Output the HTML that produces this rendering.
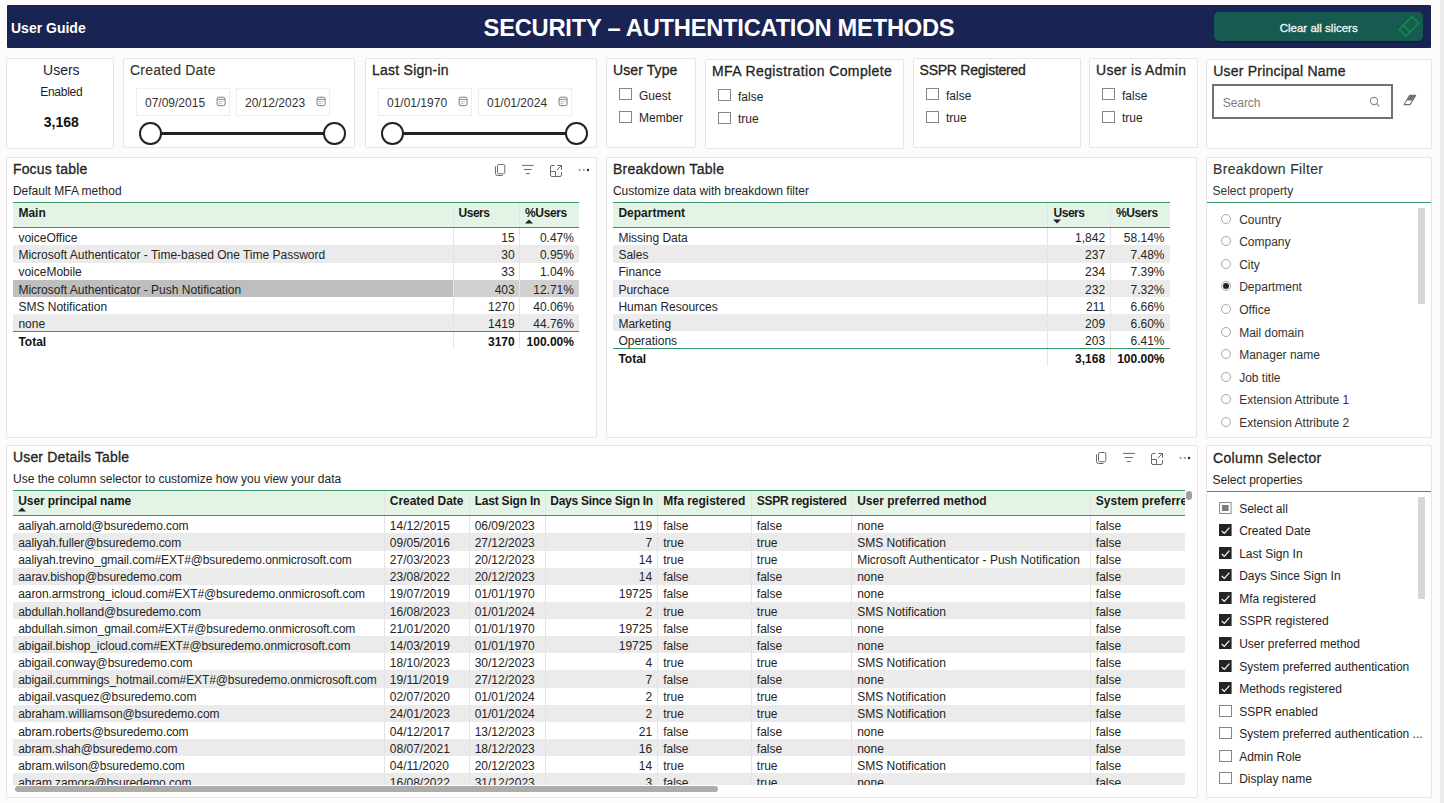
<!DOCTYPE html>
<html><head><meta charset="utf-8"><title>Security - Authentication Methods</title>
<style>
html,body{margin:0;padding:0;}
body{width:1444px;height:803px;overflow:hidden;background:#FDFBFC;position:relative;font-family:"Liberation Sans",sans-serif;color:#252423;}
.t{position:absolute;white-space:nowrap;}
.b{position:absolute;}
svg.b{overflow:visible;}
</style></head><body>
<div class="b" style="left:1440px;top:0px;width:4px;height:803px;background:#EBEBEB;"></div>
<div class="b" style="left:7px;top:5px;width:1424px;height:43px;background:#1A2452;border-radius:1px;"></div>
<div class="t" style="top:21px;font-size:14px;line-height:14px;font-weight:700;color:#FFFFFF;left:11.00px;">User Guide</div>
<div class="t" style="top:17px;font-size:23.7px;line-height:23.7px;letter-spacing:-0.237px;font-weight:700;color:#FFFFFF;left:419.00px;width:600px;text-align:center;">SECURITY – AUTHENTICATION METHODS</div>
<div class="b" style="left:1214px;top:12px;width:209px;height:29px;background:#175A50;border-radius:5px;box-shadow:0 1px 1px rgba(0,0,0,0.25);"></div>
<div class="t" style="top:23px;font-size:11.5px;line-height:11.5px;color:#F4F7F6;left:1018.70px;width:600px;text-align:center;-webkit-text-stroke:0.3px #F4F7F6;">Clear all slicers</div>
<svg class="b" style="left:1396px;top:14px" width="26" height="24" viewBox="0 0 26 24"><g transform="translate(12.9,12.4) rotate(-45)" fill="none" stroke="#13894F" stroke-width="1.6"><rect x="-9" y="-4.7" width="18" height="9.4"/><line x1="-3.2" y1="-4.7" x2="-3.2" y2="4.7"/></g></svg>
<div class="b" style="left:6px;top:58px;width:108px;height:91px;background:#fff;border:1px solid #E6E6E6;border-radius:2px;box-sizing:border-box;"></div>
<div class="t" style="top:63px;font-size:14px;line-height:14px;color:#161B33;left:-238.70px;width:600px;text-align:center;">Users</div>
<div class="t" style="top:86px;font-size:12px;line-height:12px;letter-spacing:-0.255px;color:#1C1C2E;left:-238.70px;width:600px;text-align:center;">Enabled</div>
<div class="t" style="top:115px;font-size:14px;line-height:14px;font-weight:700;color:#111111;left:-238.70px;width:600px;text-align:center;">3,168</div>
<div class="b" style="left:123px;top:58px;width:232px;height:90px;background:#fff;border:1px solid #E6E6E6;border-radius:2px;box-sizing:border-box;"></div>
<div class="t" style="top:63px;font-size:14px;line-height:14px;letter-spacing:0.197px;color:#333333;left:130.00px;-webkit-text-stroke:0.15px #333;">Created Date</div>
<div class="b" style="left:136px;top:88px;width:94px;height:28px;border:1px solid #EEEEEE;box-sizing:border-box;background:#fff;"></div>
<div class="t" style="top:97px;font-size:12px;line-height:12px;color:#333333;left:145.00px;">07/09/2015</div>
<svg class="b" style="left:216px;top:96px" width="12" height="12" viewBox="0 0 12 12"><rect x="1.1" y="1.2" width="8" height="8.5" rx="1.8" fill="none" stroke="#7C7C7C" stroke-width="1"/><path d="M1.4 3.4 H8.8" stroke="#7C7C7C" stroke-width="0.9" fill="none"/><path d="M2.8 5.7 H5.6 M2.8 7.7 H5.6" stroke="#A0A0A0" stroke-width="0.8" fill="none"/><circle cx="6.9" cy="5.7" r="0.55" fill="#8A8A8A"/></svg>
<div class="b" style="left:236px;top:88px;width:94px;height:28px;border:1px solid #EEEEEE;box-sizing:border-box;background:#fff;"></div>
<div class="t" style="top:97px;font-size:12px;line-height:12px;color:#333333;left:245.00px;">20/12/2023</div>
<svg class="b" style="left:316px;top:96px" width="12" height="12" viewBox="0 0 12 12"><rect x="1.1" y="1.2" width="8" height="8.5" rx="1.8" fill="none" stroke="#7C7C7C" stroke-width="1"/><path d="M1.4 3.4 H8.8" stroke="#7C7C7C" stroke-width="0.9" fill="none"/><path d="M2.8 5.7 H5.6 M2.8 7.7 H5.6" stroke="#A0A0A0" stroke-width="0.8" fill="none"/><circle cx="6.9" cy="5.7" r="0.55" fill="#8A8A8A"/></svg>
<div class="b" style="left:150px;top:132px;width:184px;height:3px;background:#252423;"></div>
<div class="b" style="left:139.1px;top:122.3px;width:22.6px;height:22.6px;border:2.4px solid #252423;border-radius:50%;background:#fff;box-sizing:border-box"></div>
<div class="b" style="left:323.1px;top:122.3px;width:22.6px;height:22.6px;border:2.4px solid #252423;border-radius:50%;background:#fff;box-sizing:border-box"></div>
<div class="b" style="left:365px;top:58px;width:232px;height:90px;background:#fff;border:1px solid #E6E6E6;border-radius:2px;box-sizing:border-box;"></div>
<div class="t" style="top:63px;font-size:14px;line-height:14px;letter-spacing:0.245px;left:372.00px;-webkit-text-stroke:0.3px #252423;">Last Sign-in</div>
<div class="b" style="left:378px;top:88px;width:94px;height:28px;border:1px solid #EEEEEE;box-sizing:border-box;background:#fff;"></div>
<div class="t" style="top:97px;font-size:12px;line-height:12px;color:#333333;left:387.00px;">01/01/1970</div>
<svg class="b" style="left:458px;top:96px" width="12" height="12" viewBox="0 0 12 12"><rect x="1.1" y="1.2" width="8" height="8.5" rx="1.8" fill="none" stroke="#7C7C7C" stroke-width="1"/><path d="M1.4 3.4 H8.8" stroke="#7C7C7C" stroke-width="0.9" fill="none"/><path d="M2.8 5.7 H5.6 M2.8 7.7 H5.6" stroke="#A0A0A0" stroke-width="0.8" fill="none"/><circle cx="6.9" cy="5.7" r="0.55" fill="#8A8A8A"/></svg>
<div class="b" style="left:478px;top:88px;width:94px;height:28px;border:1px solid #EEEEEE;box-sizing:border-box;background:#fff;"></div>
<div class="t" style="top:97px;font-size:12px;line-height:12px;color:#333333;left:487.00px;">01/01/2024</div>
<svg class="b" style="left:558px;top:96px" width="12" height="12" viewBox="0 0 12 12"><rect x="1.1" y="1.2" width="8" height="8.5" rx="1.8" fill="none" stroke="#7C7C7C" stroke-width="1"/><path d="M1.4 3.4 H8.8" stroke="#7C7C7C" stroke-width="0.9" fill="none"/><path d="M2.8 5.7 H5.6 M2.8 7.7 H5.6" stroke="#A0A0A0" stroke-width="0.8" fill="none"/><circle cx="6.9" cy="5.7" r="0.55" fill="#8A8A8A"/></svg>
<div class="b" style="left:392px;top:132px;width:184px;height:3px;background:#252423;"></div>
<div class="b" style="left:381.1px;top:122.3px;width:22.6px;height:22.6px;border:2.4px solid #252423;border-radius:50%;background:#fff;box-sizing:border-box"></div>
<div class="b" style="left:565.1px;top:122.3px;width:22.6px;height:22.6px;border:2.4px solid #252423;border-radius:50%;background:#fff;box-sizing:border-box"></div>
<div class="b" style="left:606px;top:58px;width:90px;height:90px;background:#fff;border:1px solid #E6E6E6;border-radius:2px;box-sizing:border-box;"></div>
<div class="t" style="top:63px;font-size:14px;line-height:14px;letter-spacing:0.096px;left:613.00px;-webkit-text-stroke:0.3px #252423;">User Type</div>
<div class="b" style="left:619px;top:88px;width:12.6px;height:12px;border:1px solid #858585;box-sizing:border-box;background:#fff;"></div>
<div class="t" style="top:90px;font-size:12px;line-height:12px;left:639.00px;">Guest</div>
<div class="b" style="left:619px;top:111px;width:12.6px;height:12px;border:1px solid #858585;box-sizing:border-box;background:#fff;"></div>
<div class="t" style="top:112px;font-size:12px;line-height:12px;left:639.00px;">Member</div>
<div class="b" style="left:705px;top:59px;width:199px;height:90px;background:#fff;border:1px solid #E6E6E6;border-radius:2px;box-sizing:border-box;"></div>
<div class="t" style="top:64px;font-size:14px;line-height:14px;letter-spacing:0.393px;left:712.00px;-webkit-text-stroke:0.3px #252423;">MFA Registration Complete</div>
<div class="b" style="left:718px;top:89px;width:12.6px;height:12px;border:1px solid #858585;box-sizing:border-box;background:#fff;"></div>
<div class="t" style="top:91px;font-size:12px;line-height:12px;left:738.00px;">false</div>
<div class="b" style="left:718px;top:112px;width:12.6px;height:12px;border:1px solid #858585;box-sizing:border-box;background:#fff;"></div>
<div class="t" style="top:113px;font-size:12px;line-height:12px;left:738.00px;">true</div>
<div class="b" style="left:913px;top:58px;width:168px;height:90px;background:#fff;border:1px solid #E6E6E6;border-radius:2px;box-sizing:border-box;"></div>
<div class="t" style="top:63px;font-size:14px;line-height:14px;letter-spacing:-0.250px;left:919.60px;-webkit-text-stroke:0.3px #252423;">SSPR Registered</div>
<div class="b" style="left:926px;top:88px;width:12.6px;height:12px;border:1px solid #858585;box-sizing:border-box;background:#fff;"></div>
<div class="t" style="top:90px;font-size:12px;line-height:12px;left:946.00px;">false</div>
<div class="b" style="left:926px;top:111px;width:12.6px;height:12px;border:1px solid #858585;box-sizing:border-box;background:#fff;"></div>
<div class="t" style="top:112px;font-size:12px;line-height:12px;left:946.00px;">true</div>
<div class="b" style="left:1089px;top:58px;width:109px;height:90px;background:#fff;border:1px solid #E6E6E6;border-radius:2px;box-sizing:border-box;"></div>
<div class="t" style="top:63px;font-size:14px;line-height:14px;letter-spacing:0.305px;left:1096.00px;-webkit-text-stroke:0.3px #252423;">User is Admin</div>
<div class="b" style="left:1102px;top:88px;width:12.6px;height:12px;border:1px solid #858585;box-sizing:border-box;background:#fff;"></div>
<div class="t" style="top:90px;font-size:12px;line-height:12px;left:1122.00px;">false</div>
<div class="b" style="left:1102px;top:111px;width:12.6px;height:12px;border:1px solid #858585;box-sizing:border-box;background:#fff;"></div>
<div class="t" style="top:112px;font-size:12px;line-height:12px;left:1122.00px;">true</div>
<div class="b" style="left:1206px;top:59px;width:226px;height:90px;background:#fff;border:1px solid #E6E6E6;border-radius:2px;box-sizing:border-box;"></div>
<div class="t" style="top:64px;font-size:14px;line-height:14px;letter-spacing:0.221px;left:1213.20px;-webkit-text-stroke:0.3px #252423;">User Principal Name</div>
<div class="b" style="left:1212px;top:84px;width:181px;height:35px;border:2px solid #707070;box-sizing:border-box;background:#fff;"></div>
<div class="t" style="top:97px;font-size:12px;line-height:12px;color:#7E7E7E;left:1222.70px;letter-spacing:-0.05px">Search</div>
<svg class="b" style="left:1368px;top:95px" width="14" height="14" viewBox="0 0 14 14"><circle cx="6" cy="6" r="3.6" fill="none" stroke="#8A8A8A" stroke-width="1.1"/><line x1="8.6" y1="8.6" x2="11.4" y2="11.4" stroke="#8A8A8A" stroke-width="1.2"/></svg>
<svg class="b" style="left:1402px;top:93px" width="16" height="14" viewBox="0 0 16 14"><path d="M7.7 2.3 L13.8 2.3 L8 11.6 L2.1 11.6 Z" fill="none" stroke="#707070" stroke-width="1.05" stroke-linejoin="round"/><path d="M7.7 2.1 L13.9 2.1 L10.9 7.4 L4.5 7.6 Z" fill="#707070"/></svg>
<div class="b" style="left:6px;top:157px;width:591px;height:281px;background:#fff;border:1px solid #E6E6E6;border-radius:2px;box-sizing:border-box;"></div>
<div class="t" style="top:162px;font-size:14px;line-height:14px;letter-spacing:0.196px;left:12.90px;-webkit-text-stroke:0.3px #252423;">Focus table</div>
<div class="t" style="top:185px;font-size:12px;line-height:12px;left:12.90px;">Default MFA method</div>
<svg class="b" style="left:492px;top:160px" width="100" height="20" viewBox="0 0 100 20"><g fill="none" stroke="#6A6A6A" stroke-width="1"><rect x="5.5" y="4.5" width="7.3" height="9.3" rx="1.3"/><path d="M3.5 6.3 V13.5 Q3.5 15.5 5.5 15.5 H10.5"/><path d="M30 5.4 H41.8 M31.8 9.5 H39.7 M33.8 13.6 H37.9"/><path d="M62.5 5.5 H60 Q58.5 5.5 58.5 7 V15 Q58.5 16.5 60 16.5 H68 Q69.5 16.5 69.5 15 V12"/><path d="M58.5 11.5 H63.5 V16.5"/><path d="M65.2 5.5 H69.5 V9.8 M69.3 5.7 L64.8 10.2"/></g><circle cx="87.6" cy="9.9" r="1.15" fill="#A2A2A2"/><circle cx="91.8" cy="9.9" r="1.15" fill="#A2A2A2"/><circle cx="96" cy="9.9" r="1.25" fill="#333"/></svg>
<div class="b" style="left:13px;top:202px;width:566px;height:26px;background:#E3F3E6;"></div>
<div class="b" style="left:13px;top:245.44px;width:566px;height:17.14px;background:#EBEBEB;"></div>
<div class="b" style="left:13px;top:279.71px;width:566px;height:17.14px;background:#D0D0D0;"></div>
<div class="b" style="left:13px;top:279.71px;width:440px;height:17.14px;background:#BEBEBE;"></div>
<div class="b" style="left:13px;top:313.98px;width:566px;height:17.14px;background:#EBEBEB;"></div>
<div class="b" style="left:453px;top:203px;width:1px;height:145.40px;background:#E4E4E4;"></div>
<div class="b" style="left:519px;top:203px;width:1px;height:145.40px;background:#E4E4E4;"></div>
<div class="b" style="left:13px;top:202px;width:566px;height:1.2px;background:#35976A;"></div>
<div class="b" style="left:13px;top:227px;width:566px;height:1.2px;background:#35976A;"></div>
<div class="t" style="top:207px;font-size:12px;line-height:12px;font-weight:700;color:#1A1A1A;left:18.40px;">Main</div>
<div class="t" style="top:207px;font-size:12px;line-height:12px;letter-spacing:-0.465px;font-weight:700;color:#1A1A1A;left:458.50px;">Users</div>
<div class="t" style="top:207px;font-size:12px;line-height:12px;letter-spacing:-0.346px;font-weight:700;color:#1A1A1A;left:525.00px;">%Users</div>
<div class="t" style="top:232px;font-size:12px;line-height:12px;left:18.40px;">voiceOffice</div>
<div class="t" style="top:232px;font-size:12px;line-height:12px;right:929.30px;">15</div>
<div class="t" style="top:232px;font-size:12px;line-height:12px;right:870.10px;">0.47%</div>
<div class="t" style="top:249px;font-size:12px;line-height:12px;left:18.40px;">Microsoft Authenticator - Time-based One Time Password</div>
<div class="t" style="top:249px;font-size:12px;line-height:12px;right:929.30px;">30</div>
<div class="t" style="top:249px;font-size:12px;line-height:12px;right:870.10px;">0.95%</div>
<div class="t" style="top:266px;font-size:12px;line-height:12px;left:18.40px;">voiceMobile</div>
<div class="t" style="top:266px;font-size:12px;line-height:12px;right:929.30px;">33</div>
<div class="t" style="top:266px;font-size:12px;line-height:12px;right:870.10px;">1.04%</div>
<div class="t" style="top:284px;font-size:12px;line-height:12px;left:18.40px;">Microsoft Authenticator - Push Notification</div>
<div class="t" style="top:284px;font-size:12px;line-height:12px;right:929.30px;">403</div>
<div class="t" style="top:284px;font-size:12px;line-height:12px;right:870.10px;">12.71%</div>
<div class="t" style="top:301px;font-size:12px;line-height:12px;left:18.40px;">SMS Notification</div>
<div class="t" style="top:301px;font-size:12px;line-height:12px;right:929.30px;">1270</div>
<div class="t" style="top:301px;font-size:12px;line-height:12px;right:870.10px;">40.06%</div>
<div class="t" style="top:318px;font-size:12px;line-height:12px;left:18.40px;">none</div>
<div class="t" style="top:318px;font-size:12px;line-height:12px;right:929.30px;">1419</div>
<div class="t" style="top:318px;font-size:12px;line-height:12px;right:870.10px;">44.76%</div>
<div class="b" style="left:13px;top:331px;width:566px;height:1.2px;background:#35976A;"></div>
<div class="t" style="top:336px;font-size:12px;line-height:12px;font-weight:700;color:#111111;left:18.40px;">Total</div>
<div class="t" style="top:336px;font-size:12px;line-height:12px;font-weight:700;color:#111111;right:929.30px;">3170</div>
<div class="t" style="top:336px;font-size:12px;line-height:12px;font-weight:700;color:#111111;right:870.10px;">100.00%</div>
<svg class="b" style="left:524.7px;top:219px" width="8" height="5" viewBox="0 0 8 5"><path d="M0 4.6 L4 0.4 L8 4.6 Z" fill="#222"/></svg>
<div class="b" style="left:606px;top:157px;width:591px;height:281px;background:#fff;border:1px solid #E6E6E6;border-radius:2px;box-sizing:border-box;"></div>
<div class="t" style="top:162px;font-size:14px;line-height:14px;letter-spacing:0.278px;left:612.90px;-webkit-text-stroke:0.3px #252423;">Breakdown Table</div>
<div class="t" style="top:185px;font-size:12px;line-height:12px;left:612.90px;">Customize data with breakdown filter</div>
<div class="b" style="left:613px;top:202px;width:557px;height:26px;background:#E3F3E6;"></div>
<div class="b" style="left:613px;top:245.44px;width:557px;height:17.14px;background:#EBEBEB;"></div>
<div class="b" style="left:613px;top:279.71px;width:557px;height:17.14px;background:#EBEBEB;"></div>
<div class="b" style="left:613px;top:313.98px;width:557px;height:17.14px;background:#EBEBEB;"></div>
<div class="b" style="left:1047px;top:203px;width:1px;height:162.80px;background:#E4E4E4;"></div>
<div class="b" style="left:1110px;top:203px;width:1px;height:162.80px;background:#E4E4E4;"></div>
<div class="b" style="left:613px;top:202px;width:557px;height:1.2px;background:#35976A;"></div>
<div class="b" style="left:613px;top:227px;width:557px;height:1.2px;background:#35976A;"></div>
<div class="t" style="top:207px;font-size:12px;line-height:12px;font-weight:700;color:#1A1A1A;left:618.40px;">Department</div>
<div class="t" style="top:207px;font-size:12px;line-height:12px;letter-spacing:-0.465px;font-weight:700;color:#1A1A1A;left:1053.50px;">Users</div>
<div class="t" style="top:207px;font-size:12px;line-height:12px;letter-spacing:-0.346px;font-weight:700;color:#1A1A1A;left:1115.90px;">%Users</div>
<div class="t" style="top:232px;font-size:12px;line-height:12px;left:618.40px;">Missing Data</div>
<div class="t" style="top:232px;font-size:12px;line-height:12px;right:338.90px;">1,842</div>
<div class="t" style="top:232px;font-size:12px;line-height:12px;right:279.50px;">58.14%</div>
<div class="t" style="top:249px;font-size:12px;line-height:12px;left:618.40px;">Sales</div>
<div class="t" style="top:249px;font-size:12px;line-height:12px;right:338.90px;">237</div>
<div class="t" style="top:249px;font-size:12px;line-height:12px;right:279.50px;">7.48%</div>
<div class="t" style="top:266px;font-size:12px;line-height:12px;left:618.40px;">Finance</div>
<div class="t" style="top:266px;font-size:12px;line-height:12px;right:338.90px;">234</div>
<div class="t" style="top:266px;font-size:12px;line-height:12px;right:279.50px;">7.39%</div>
<div class="t" style="top:284px;font-size:12px;line-height:12px;left:618.40px;">Purchace</div>
<div class="t" style="top:284px;font-size:12px;line-height:12px;right:338.90px;">232</div>
<div class="t" style="top:284px;font-size:12px;line-height:12px;right:279.50px;">7.32%</div>
<div class="t" style="top:301px;font-size:12px;line-height:12px;left:618.40px;">Human Resources</div>
<div class="t" style="top:301px;font-size:12px;line-height:12px;right:338.90px;">211</div>
<div class="t" style="top:301px;font-size:12px;line-height:12px;right:279.50px;">6.66%</div>
<div class="t" style="top:318px;font-size:12px;line-height:12px;left:618.40px;">Marketing</div>
<div class="t" style="top:318px;font-size:12px;line-height:12px;right:338.90px;">209</div>
<div class="t" style="top:318px;font-size:12px;line-height:12px;right:279.50px;">6.60%</div>
<div class="t" style="top:335px;font-size:12px;line-height:12px;left:618.40px;">Operations</div>
<div class="t" style="top:335px;font-size:12px;line-height:12px;right:338.90px;">203</div>
<div class="t" style="top:335px;font-size:12px;line-height:12px;right:279.50px;">6.41%</div>
<div class="b" style="left:613px;top:348px;width:557px;height:1.2px;background:#35976A;"></div>
<div class="t" style="top:353px;font-size:12px;line-height:12px;font-weight:700;color:#111111;left:618.40px;">Total</div>
<div class="t" style="top:353px;font-size:12px;line-height:12px;font-weight:700;color:#111111;right:338.90px;">3,168</div>
<div class="t" style="top:353px;font-size:12px;line-height:12px;font-weight:700;color:#111111;right:279.50px;">100.00%</div>
<svg class="b" style="left:1053px;top:219.2px" width="8" height="5" viewBox="0 0 8 5"><path d="M0 0.4 L4 4.6 L8 0.4 Z" fill="#222"/></svg>
<div class="b" style="left:1206px;top:157px;width:226px;height:281px;background:#fff;border:1px solid #E6E6E6;border-radius:2px;box-sizing:border-box;"></div>
<div class="t" style="top:162px;font-size:14px;line-height:14px;letter-spacing:0.327px;color:#333333;left:1213.00px;-webkit-text-stroke:0.15px #333;">Breakdown Filter</div>
<div class="t" style="top:185px;font-size:12px;line-height:12px;color:#333333;left:1212.50px;">Select property</div>
<div class="b" style="left:1207px;top:201.5px;width:224px;height:1.2px;background:#35976A;"></div>
<div class="b" style="left:1418px;top:207.5px;width:7px;height:96px;background:#D6D6D6;"></div>
<div class="b" style="left:1220.5px;top:214px;width:10px;height:10px;border:1px solid #A8A8A8;border-radius:50%;box-sizing:border-box;background:#fff"></div>
<div class="t" style="top:214px;font-size:12px;line-height:12px;color:#333333;left:1239.20px;">Country</div>
<div class="b" style="left:1220.5px;top:236px;width:10px;height:10px;border:1px solid #A8A8A8;border-radius:50%;box-sizing:border-box;background:#fff"></div>
<div class="t" style="top:236px;font-size:12px;line-height:12px;color:#333333;left:1239.20px;">Company</div>
<div class="b" style="left:1220.5px;top:259px;width:10px;height:10px;border:1px solid #A8A8A8;border-radius:50%;box-sizing:border-box;background:#fff"></div>
<div class="t" style="top:259px;font-size:12px;line-height:12px;color:#333333;left:1239.20px;">City</div>
<div class="b" style="left:1220.5px;top:281px;width:10px;height:10px;border:1px solid #A8A8A8;border-radius:50%;box-sizing:border-box;background:#fff"></div>
<div class="b" style="left:1222.5px;top:283px;width:6px;height:6px;border-radius:50%;background:#252423"></div>
<div class="t" style="top:281px;font-size:12px;line-height:12px;color:#333333;left:1239.20px;">Department</div>
<div class="b" style="left:1220.5px;top:304px;width:10px;height:10px;border:1px solid #A8A8A8;border-radius:50%;box-sizing:border-box;background:#fff"></div>
<div class="t" style="top:304px;font-size:12px;line-height:12px;color:#333333;left:1239.20px;">Office</div>
<div class="b" style="left:1220.5px;top:327px;width:10px;height:10px;border:1px solid #A8A8A8;border-radius:50%;box-sizing:border-box;background:#fff"></div>
<div class="t" style="top:327px;font-size:12px;line-height:12px;color:#333333;left:1239.20px;">Mail domain</div>
<div class="b" style="left:1220.5px;top:349px;width:10px;height:10px;border:1px solid #A8A8A8;border-radius:50%;box-sizing:border-box;background:#fff"></div>
<div class="t" style="top:349px;font-size:12px;line-height:12px;color:#333333;left:1239.20px;">Manager name</div>
<div class="b" style="left:1220.5px;top:372px;width:10px;height:10px;border:1px solid #A8A8A8;border-radius:50%;box-sizing:border-box;background:#fff"></div>
<div class="t" style="top:372px;font-size:12px;line-height:12px;color:#333333;left:1239.20px;">Job title</div>
<div class="b" style="left:1220.5px;top:394px;width:10px;height:10px;border:1px solid #A8A8A8;border-radius:50%;box-sizing:border-box;background:#fff"></div>
<div class="t" style="top:394px;font-size:12px;line-height:12px;color:#333333;left:1239.20px;">Extension Attribute 1</div>
<div class="b" style="left:1220.5px;top:417px;width:10px;height:10px;border:1px solid #A8A8A8;border-radius:50%;box-sizing:border-box;background:#fff"></div>
<div class="t" style="top:417px;font-size:12px;line-height:12px;color:#333333;left:1239.20px;">Extension Attribute 2</div>
<div class="b" style="left:6px;top:445px;width:1192px;height:353px;background:#fff;border:1px solid #E6E6E6;border-radius:2px;box-sizing:border-box;"></div>
<div class="t" style="top:450px;font-size:14px;line-height:14px;letter-spacing:0.158px;left:13.00px;-webkit-text-stroke:0.3px #252423;">User Details Table</div>
<div class="t" style="top:473px;font-size:12px;line-height:12px;left:13.00px;">Use the column selector to customize how you view your data</div>
<svg class="b" style="left:1093px;top:448px" width="100" height="20" viewBox="0 0 100 20"><g fill="none" stroke="#6A6A6A" stroke-width="1"><rect x="5.5" y="4.5" width="7.3" height="9.3" rx="1.3"/><path d="M3.5 6.3 V13.5 Q3.5 15.5 5.5 15.5 H10.5"/><path d="M30 5.4 H41.8 M31.8 9.5 H39.7 M33.8 13.6 H37.9"/><path d="M62.5 5.5 H60 Q58.5 5.5 58.5 7 V15 Q58.5 16.5 60 16.5 H68 Q69.5 16.5 69.5 15 V12"/><path d="M58.5 11.5 H63.5 V16.5"/><path d="M65.2 5.5 H69.5 V9.8 M69.3 5.7 L64.8 10.2"/></g><circle cx="87.6" cy="9.9" r="1.15" fill="#A2A2A2"/><circle cx="91.8" cy="9.9" r="1.15" fill="#A2A2A2"/><circle cx="96" cy="9.9" r="1.25" fill="#333"/></svg>
<div class="b" style="left:0;top:0;width:1185px;height:803px;overflow:hidden">
<div class="b" style="left:13px;top:490px;width:1172px;height:26px;background:#E3F3E6;"></div>
<div class="b" style="left:13px;top:533.43px;width:1172px;height:17.13px;background:#EBEBEB;"></div>
<div class="b" style="left:13px;top:567.69px;width:1172px;height:17.13px;background:#EBEBEB;"></div>
<div class="b" style="left:13px;top:601.95px;width:1172px;height:17.13px;background:#EBEBEB;"></div>
<div class="b" style="left:13px;top:636.21px;width:1172px;height:17.13px;background:#EBEBEB;"></div>
<div class="b" style="left:13px;top:670.47px;width:1172px;height:17.13px;background:#EBEBEB;"></div>
<div class="b" style="left:13px;top:704.73px;width:1172px;height:17.13px;background:#EBEBEB;"></div>
<div class="b" style="left:13px;top:738.99px;width:1172px;height:17.13px;background:#EBEBEB;"></div>
<div class="b" style="left:13px;top:773.25px;width:1172px;height:11.95px;background:#EBEBEB;"></div>
<div class="b" style="left:384px;top:491px;width:1px;height:294.20px;background:#E4E4E4;"></div>
<div class="b" style="left:469px;top:491px;width:1px;height:294.20px;background:#E4E4E4;"></div>
<div class="b" style="left:545px;top:491px;width:1px;height:294.20px;background:#E4E4E4;"></div>
<div class="b" style="left:657px;top:491px;width:1px;height:294.20px;background:#E4E4E4;"></div>
<div class="b" style="left:751px;top:491px;width:1px;height:294.20px;background:#E4E4E4;"></div>
<div class="b" style="left:851px;top:491px;width:1px;height:294.20px;background:#E4E4E4;"></div>
<div class="b" style="left:1090px;top:491px;width:1px;height:294.20px;background:#E4E4E4;"></div>
<div class="b" style="left:13px;top:490px;width:1172px;height:1.2px;background:#35976A;"></div>
<div class="b" style="left:13px;top:515px;width:1172px;height:1.2px;background:#35976A;"></div>
<div class="t" style="top:495px;font-size:12px;line-height:12px;letter-spacing:-0.104px;font-weight:700;color:#1A1A1A;left:18.30px;">User principal name</div>
<div class="t" style="top:495px;font-size:12px;line-height:12px;letter-spacing:-0.030px;font-weight:700;color:#1A1A1A;left:389.80px;">Created Date</div>
<div class="t" style="top:495px;font-size:12px;line-height:12px;letter-spacing:-0.215px;font-weight:700;color:#1A1A1A;left:474.70px;">Last Sign In</div>
<div class="t" style="top:495px;font-size:12px;line-height:12px;letter-spacing:-0.265px;font-weight:700;color:#1A1A1A;left:550.30px;">Days Since Sign In</div>
<div class="t" style="top:495px;font-size:12px;line-height:12px;font-weight:700;color:#1A1A1A;left:663.20px;">Mfa registered</div>
<div class="t" style="top:495px;font-size:12px;line-height:12px;letter-spacing:-0.294px;font-weight:700;color:#1A1A1A;left:756.80px;">SSPR registered</div>
<div class="t" style="top:495px;font-size:12px;line-height:12px;font-weight:700;color:#1A1A1A;left:857.20px;">User preferred method</div>
<div class="t" style="top:495px;font-size:12px;line-height:12px;font-weight:700;color:#1A1A1A;left:1095.80px;">System preferred authentication</div>
<div class="b" style="left:0px;top:516px;width:1185px;height:269.20px;overflow:hidden">
<div class="t" style="top:4px;left:18.30px;font-size:12px;line-height:12px;letter-spacing:-0.1px;">aaliyah.arnold@bsuredemo.com</div>
<div class="t" style="top:4px;left:389.80px;font-size:12px;line-height:12px;">14/12/2015</div>
<div class="t" style="top:4px;left:474.70px;font-size:12px;line-height:12px;">06/09/2023</div>
<div class="t" style="top:4px;right:532.90px;font-size:12px;line-height:12px">119</div>
<div class="t" style="top:4px;left:663.20px;font-size:12px;line-height:12px;">false</div>
<div class="t" style="top:4px;left:756.80px;font-size:12px;line-height:12px;">false</div>
<div class="t" style="top:4px;left:857.20px;font-size:12px;line-height:12px;">none</div>
<div class="t" style="top:4px;left:1095.80px;font-size:12px;line-height:12px;">false</div>
<div class="t" style="top:21px;left:18.30px;font-size:12px;line-height:12px;letter-spacing:-0.1px;">aaliyah.fuller@bsuredemo.com</div>
<div class="t" style="top:21px;left:389.80px;font-size:12px;line-height:12px;">09/05/2016</div>
<div class="t" style="top:21px;left:474.70px;font-size:12px;line-height:12px;">27/12/2023</div>
<div class="t" style="top:21px;right:532.90px;font-size:12px;line-height:12px">7</div>
<div class="t" style="top:21px;left:663.20px;font-size:12px;line-height:12px;">true</div>
<div class="t" style="top:21px;left:756.80px;font-size:12px;line-height:12px;">true</div>
<div class="t" style="top:21px;left:857.20px;font-size:12px;line-height:12px;">SMS Notification</div>
<div class="t" style="top:21px;left:1095.80px;font-size:12px;line-height:12px;">false</div>
<div class="t" style="top:38px;left:18.30px;font-size:12px;line-height:12px;letter-spacing:-0.1px;">aaliyah.trevino_gmail.com#EXT#@bsuredemo.onmicrosoft.com</div>
<div class="t" style="top:38px;left:389.80px;font-size:12px;line-height:12px;">27/03/2023</div>
<div class="t" style="top:38px;left:474.70px;font-size:12px;line-height:12px;">20/12/2023</div>
<div class="t" style="top:38px;right:532.90px;font-size:12px;line-height:12px">14</div>
<div class="t" style="top:38px;left:663.20px;font-size:12px;line-height:12px;">true</div>
<div class="t" style="top:38px;left:756.80px;font-size:12px;line-height:12px;">true</div>
<div class="t" style="top:38px;left:857.20px;font-size:12px;line-height:12px;">Microsoft Authenticator - Push Notification</div>
<div class="t" style="top:38px;left:1095.80px;font-size:12px;line-height:12px;">false</div>
<div class="t" style="top:55px;left:18.30px;font-size:12px;line-height:12px;letter-spacing:-0.1px;">aarav.bishop@bsuredemo.com</div>
<div class="t" style="top:55px;left:389.80px;font-size:12px;line-height:12px;">23/08/2022</div>
<div class="t" style="top:55px;left:474.70px;font-size:12px;line-height:12px;">20/12/2023</div>
<div class="t" style="top:55px;right:532.90px;font-size:12px;line-height:12px">14</div>
<div class="t" style="top:55px;left:663.20px;font-size:12px;line-height:12px;">false</div>
<div class="t" style="top:55px;left:756.80px;font-size:12px;line-height:12px;">false</div>
<div class="t" style="top:55px;left:857.20px;font-size:12px;line-height:12px;">none</div>
<div class="t" style="top:55px;left:1095.80px;font-size:12px;line-height:12px;">false</div>
<div class="t" style="top:72px;left:18.30px;font-size:12px;line-height:12px;letter-spacing:-0.1px;">aaron.armstrong_icloud.com#EXT#@bsuredemo.onmicrosoft.com</div>
<div class="t" style="top:72px;left:389.80px;font-size:12px;line-height:12px;">19/07/2019</div>
<div class="t" style="top:72px;left:474.70px;font-size:12px;line-height:12px;">01/01/1970</div>
<div class="t" style="top:72px;right:532.90px;font-size:12px;line-height:12px">19725</div>
<div class="t" style="top:72px;left:663.20px;font-size:12px;line-height:12px;">false</div>
<div class="t" style="top:72px;left:756.80px;font-size:12px;line-height:12px;">false</div>
<div class="t" style="top:72px;left:857.20px;font-size:12px;line-height:12px;">none</div>
<div class="t" style="top:72px;left:1095.80px;font-size:12px;line-height:12px;">false</div>
<div class="t" style="top:90px;left:18.30px;font-size:12px;line-height:12px;letter-spacing:-0.1px;">abdullah.holland@bsuredemo.com</div>
<div class="t" style="top:90px;left:389.80px;font-size:12px;line-height:12px;">16/08/2023</div>
<div class="t" style="top:90px;left:474.70px;font-size:12px;line-height:12px;">01/01/2024</div>
<div class="t" style="top:90px;right:532.90px;font-size:12px;line-height:12px">2</div>
<div class="t" style="top:90px;left:663.20px;font-size:12px;line-height:12px;">true</div>
<div class="t" style="top:90px;left:756.80px;font-size:12px;line-height:12px;">true</div>
<div class="t" style="top:90px;left:857.20px;font-size:12px;line-height:12px;">SMS Notification</div>
<div class="t" style="top:90px;left:1095.80px;font-size:12px;line-height:12px;">false</div>
<div class="t" style="top:107px;left:18.30px;font-size:12px;line-height:12px;letter-spacing:-0.1px;">abdullah.simon_gmail.com#EXT#@bsuredemo.onmicrosoft.com</div>
<div class="t" style="top:107px;left:389.80px;font-size:12px;line-height:12px;">21/01/2020</div>
<div class="t" style="top:107px;left:474.70px;font-size:12px;line-height:12px;">01/01/1970</div>
<div class="t" style="top:107px;right:532.90px;font-size:12px;line-height:12px">19725</div>
<div class="t" style="top:107px;left:663.20px;font-size:12px;line-height:12px;">false</div>
<div class="t" style="top:107px;left:756.80px;font-size:12px;line-height:12px;">false</div>
<div class="t" style="top:107px;left:857.20px;font-size:12px;line-height:12px;">none</div>
<div class="t" style="top:107px;left:1095.80px;font-size:12px;line-height:12px;">false</div>
<div class="t" style="top:124px;left:18.30px;font-size:12px;line-height:12px;letter-spacing:-0.1px;">abigail.bishop_icloud.com#EXT#@bsuredemo.onmicrosoft.com</div>
<div class="t" style="top:124px;left:389.80px;font-size:12px;line-height:12px;">14/03/2019</div>
<div class="t" style="top:124px;left:474.70px;font-size:12px;line-height:12px;">01/01/1970</div>
<div class="t" style="top:124px;right:532.90px;font-size:12px;line-height:12px">19725</div>
<div class="t" style="top:124px;left:663.20px;font-size:12px;line-height:12px;">false</div>
<div class="t" style="top:124px;left:756.80px;font-size:12px;line-height:12px;">false</div>
<div class="t" style="top:124px;left:857.20px;font-size:12px;line-height:12px;">none</div>
<div class="t" style="top:124px;left:1095.80px;font-size:12px;line-height:12px;">false</div>
<div class="t" style="top:141px;left:18.30px;font-size:12px;line-height:12px;letter-spacing:-0.1px;">abigail.conway@bsuredemo.com</div>
<div class="t" style="top:141px;left:389.80px;font-size:12px;line-height:12px;">18/10/2023</div>
<div class="t" style="top:141px;left:474.70px;font-size:12px;line-height:12px;">30/12/2023</div>
<div class="t" style="top:141px;right:532.90px;font-size:12px;line-height:12px">4</div>
<div class="t" style="top:141px;left:663.20px;font-size:12px;line-height:12px;">true</div>
<div class="t" style="top:141px;left:756.80px;font-size:12px;line-height:12px;">true</div>
<div class="t" style="top:141px;left:857.20px;font-size:12px;line-height:12px;">SMS Notification</div>
<div class="t" style="top:141px;left:1095.80px;font-size:12px;line-height:12px;">false</div>
<div class="t" style="top:158px;left:18.30px;font-size:12px;line-height:12px;letter-spacing:-0.1px;">abigail.cummings_hotmail.com#EXT#@bsuredemo.onmicrosoft.com</div>
<div class="t" style="top:158px;left:389.80px;font-size:12px;line-height:12px;">19/11/2019</div>
<div class="t" style="top:158px;left:474.70px;font-size:12px;line-height:12px;">27/12/2023</div>
<div class="t" style="top:158px;right:532.90px;font-size:12px;line-height:12px">7</div>
<div class="t" style="top:158px;left:663.20px;font-size:12px;line-height:12px;">false</div>
<div class="t" style="top:158px;left:756.80px;font-size:12px;line-height:12px;">false</div>
<div class="t" style="top:158px;left:857.20px;font-size:12px;line-height:12px;">none</div>
<div class="t" style="top:158px;left:1095.80px;font-size:12px;line-height:12px;">false</div>
<div class="t" style="top:175px;left:18.30px;font-size:12px;line-height:12px;letter-spacing:-0.1px;">abigail.vasquez@bsuredemo.com</div>
<div class="t" style="top:175px;left:389.80px;font-size:12px;line-height:12px;">02/07/2020</div>
<div class="t" style="top:175px;left:474.70px;font-size:12px;line-height:12px;">01/01/2024</div>
<div class="t" style="top:175px;right:532.90px;font-size:12px;line-height:12px">2</div>
<div class="t" style="top:175px;left:663.20px;font-size:12px;line-height:12px;">true</div>
<div class="t" style="top:175px;left:756.80px;font-size:12px;line-height:12px;">true</div>
<div class="t" style="top:175px;left:857.20px;font-size:12px;line-height:12px;">SMS Notification</div>
<div class="t" style="top:175px;left:1095.80px;font-size:12px;line-height:12px;">false</div>
<div class="t" style="top:192px;left:18.30px;font-size:12px;line-height:12px;letter-spacing:-0.1px;">abraham.williamson@bsuredemo.com</div>
<div class="t" style="top:192px;left:389.80px;font-size:12px;line-height:12px;">24/01/2023</div>
<div class="t" style="top:192px;left:474.70px;font-size:12px;line-height:12px;">01/01/2024</div>
<div class="t" style="top:192px;right:532.90px;font-size:12px;line-height:12px">2</div>
<div class="t" style="top:192px;left:663.20px;font-size:12px;line-height:12px;">true</div>
<div class="t" style="top:192px;left:756.80px;font-size:12px;line-height:12px;">true</div>
<div class="t" style="top:192px;left:857.20px;font-size:12px;line-height:12px;">SMS Notification</div>
<div class="t" style="top:192px;left:1095.80px;font-size:12px;line-height:12px;">false</div>
<div class="t" style="top:210px;left:18.30px;font-size:12px;line-height:12px;letter-spacing:-0.1px;">abram.roberts@bsuredemo.com</div>
<div class="t" style="top:210px;left:389.80px;font-size:12px;line-height:12px;">04/12/2017</div>
<div class="t" style="top:210px;left:474.70px;font-size:12px;line-height:12px;">13/12/2023</div>
<div class="t" style="top:210px;right:532.90px;font-size:12px;line-height:12px">21</div>
<div class="t" style="top:210px;left:663.20px;font-size:12px;line-height:12px;">false</div>
<div class="t" style="top:210px;left:756.80px;font-size:12px;line-height:12px;">false</div>
<div class="t" style="top:210px;left:857.20px;font-size:12px;line-height:12px;">none</div>
<div class="t" style="top:210px;left:1095.80px;font-size:12px;line-height:12px;">false</div>
<div class="t" style="top:227px;left:18.30px;font-size:12px;line-height:12px;letter-spacing:-0.1px;">abram.shah@bsuredemo.com</div>
<div class="t" style="top:227px;left:389.80px;font-size:12px;line-height:12px;">08/07/2021</div>
<div class="t" style="top:227px;left:474.70px;font-size:12px;line-height:12px;">18/12/2023</div>
<div class="t" style="top:227px;right:532.90px;font-size:12px;line-height:12px">16</div>
<div class="t" style="top:227px;left:663.20px;font-size:12px;line-height:12px;">false</div>
<div class="t" style="top:227px;left:756.80px;font-size:12px;line-height:12px;">false</div>
<div class="t" style="top:227px;left:857.20px;font-size:12px;line-height:12px;">none</div>
<div class="t" style="top:227px;left:1095.80px;font-size:12px;line-height:12px;">false</div>
<div class="t" style="top:244px;left:18.30px;font-size:12px;line-height:12px;letter-spacing:-0.1px;">abram.wilson@bsuredemo.com</div>
<div class="t" style="top:244px;left:389.80px;font-size:12px;line-height:12px;">04/11/2020</div>
<div class="t" style="top:244px;left:474.70px;font-size:12px;line-height:12px;">20/12/2023</div>
<div class="t" style="top:244px;right:532.90px;font-size:12px;line-height:12px">14</div>
<div class="t" style="top:244px;left:663.20px;font-size:12px;line-height:12px;">true</div>
<div class="t" style="top:244px;left:756.80px;font-size:12px;line-height:12px;">true</div>
<div class="t" style="top:244px;left:857.20px;font-size:12px;line-height:12px;">SMS Notification</div>
<div class="t" style="top:244px;left:1095.80px;font-size:12px;line-height:12px;">false</div>
<div class="t" style="top:261px;left:18.30px;font-size:12px;line-height:12px;letter-spacing:-0.1px;">abram.zamora@bsuredemo.com</div>
<div class="t" style="top:261px;left:389.80px;font-size:12px;line-height:12px;">16/08/2022</div>
<div class="t" style="top:261px;left:474.70px;font-size:12px;line-height:12px;">31/12/2023</div>
<div class="t" style="top:261px;right:532.90px;font-size:12px;line-height:12px">3</div>
<div class="t" style="top:261px;left:663.20px;font-size:12px;line-height:12px;">false</div>
<div class="t" style="top:261px;left:756.80px;font-size:12px;line-height:12px;">true</div>
<div class="t" style="top:261px;left:857.20px;font-size:12px;line-height:12px;">none</div>
<div class="t" style="top:261px;left:1095.80px;font-size:12px;line-height:12px;">false</div>
</div>
</div>
<svg class="b" style="left:18.3px;top:507px" width="8" height="5" viewBox="0 0 8 5"><path d="M0 4.6 L4 0.4 L8 4.6 Z" fill="#222"/></svg>
<div class="b" style="left:1186.1px;top:491px;width:5.6px;height:9px;background:#A0A0A0;border-radius:3px;"></div>
<div class="b" style="left:14.6px;top:786.2px;width:703.2px;height:6.2px;background:#ADACAB;border-radius:3.1px;"></div>
<div class="b" style="left:1206px;top:445px;width:226px;height:353px;background:#fff;border:1px solid #E6E6E6;border-radius:2px;box-sizing:border-box;"></div>
<div class="t" style="top:451px;font-size:14px;line-height:14px;letter-spacing:0.339px;left:1213.00px;-webkit-text-stroke:0.3px #252423;">Column Selector</div>
<div class="t" style="top:474px;font-size:12px;line-height:12px;left:1212.50px;">Select properties</div>
<div class="b" style="left:1207px;top:490.7px;width:224px;height:1.2px;background:#35976A;"></div>
<div class="b" style="left:1418px;top:496.5px;width:7px;height:102px;background:#D6D6D6;"></div>
<svg class="b" style="left:1219.2px;top:502px" width="12.6" height="12" viewBox="0 0 12.6 12"><rect x="0.5" y="0.5" width="11.6" height="11" fill="#fff" stroke="#8C8C8C" stroke-width="1"/><rect x="3" y="3" width="6.6" height="6" fill="#7A7A7A"/></svg>
<div class="t" style="top:503px;font-size:12px;line-height:12px;left:1239.20px;">Select all</div>
<svg class="b" style="left:1219.2px;top:524px" width="12.6" height="12" viewBox="0 0 12.6 12"><rect x="0" y="0" width="12.6" height="12" fill="#252423"/><path d="M2.8 7 L5.3 9.4 L10.4 3.6" fill="none" stroke="#fff" stroke-width="1.1"/></svg>
<div class="t" style="top:525px;font-size:12px;line-height:12px;left:1239.20px;">Created Date</div>
<svg class="b" style="left:1219.2px;top:547px" width="12.6" height="12" viewBox="0 0 12.6 12"><rect x="0" y="0" width="12.6" height="12" fill="#252423"/><path d="M2.8 7 L5.3 9.4 L10.4 3.6" fill="none" stroke="#fff" stroke-width="1.1"/></svg>
<div class="t" style="top:548px;font-size:12px;line-height:12px;left:1239.20px;">Last Sign In</div>
<svg class="b" style="left:1219.2px;top:569px" width="12.6" height="12" viewBox="0 0 12.6 12"><rect x="0" y="0" width="12.6" height="12" fill="#252423"/><path d="M2.8 7 L5.3 9.4 L10.4 3.6" fill="none" stroke="#fff" stroke-width="1.1"/></svg>
<div class="t" style="top:570px;font-size:12px;line-height:12px;left:1239.20px;">Days Since Sign In</div>
<svg class="b" style="left:1219.2px;top:592px" width="12.6" height="12" viewBox="0 0 12.6 12"><rect x="0" y="0" width="12.6" height="12" fill="#252423"/><path d="M2.8 7 L5.3 9.4 L10.4 3.6" fill="none" stroke="#fff" stroke-width="1.1"/></svg>
<div class="t" style="top:593px;font-size:12px;line-height:12px;left:1239.20px;">Mfa registered</div>
<svg class="b" style="left:1219.2px;top:614px" width="12.6" height="12" viewBox="0 0 12.6 12"><rect x="0" y="0" width="12.6" height="12" fill="#252423"/><path d="M2.8 7 L5.3 9.4 L10.4 3.6" fill="none" stroke="#fff" stroke-width="1.1"/></svg>
<div class="t" style="top:615px;font-size:12px;line-height:12px;left:1239.20px;">SSPR registered</div>
<svg class="b" style="left:1219.2px;top:637px" width="12.6" height="12" viewBox="0 0 12.6 12"><rect x="0" y="0" width="12.6" height="12" fill="#252423"/><path d="M2.8 7 L5.3 9.4 L10.4 3.6" fill="none" stroke="#fff" stroke-width="1.1"/></svg>
<div class="t" style="top:638px;font-size:12px;line-height:12px;left:1239.20px;">User preferred method</div>
<svg class="b" style="left:1219.2px;top:660px" width="12.6" height="12" viewBox="0 0 12.6 12"><rect x="0" y="0" width="12.6" height="12" fill="#252423"/><path d="M2.8 7 L5.3 9.4 L10.4 3.6" fill="none" stroke="#fff" stroke-width="1.1"/></svg>
<div class="t" style="top:661px;font-size:12px;line-height:12px;left:1239.20px;">System preferred authentication</div>
<svg class="b" style="left:1219.2px;top:682px" width="12.6" height="12" viewBox="0 0 12.6 12"><rect x="0" y="0" width="12.6" height="12" fill="#252423"/><path d="M2.8 7 L5.3 9.4 L10.4 3.6" fill="none" stroke="#fff" stroke-width="1.1"/></svg>
<div class="t" style="top:683px;font-size:12px;line-height:12px;left:1239.20px;">Methods registered</div>
<div class="b" style="left:1219.2px;top:705px;width:12.6px;height:12px;border:1px solid #858585;box-sizing:border-box;background:#fff;"></div>
<div class="t" style="top:706px;font-size:12px;line-height:12px;left:1239.20px;">SSPR enabled</div>
<div class="b" style="left:1219.2px;top:727px;width:12.6px;height:12px;border:1px solid #858585;box-sizing:border-box;background:#fff;"></div>
<div class="t" style="top:728px;font-size:12px;line-height:12px;left:1239.20px;">System preferred authentication ...</div>
<div class="b" style="left:1219.2px;top:750px;width:12.6px;height:12px;border:1px solid #858585;box-sizing:border-box;background:#fff;"></div>
<div class="t" style="top:751px;font-size:12px;line-height:12px;left:1239.20px;">Admin Role</div>
<div class="b" style="left:1219.2px;top:772px;width:12.6px;height:12px;border:1px solid #858585;box-sizing:border-box;background:#fff;"></div>
<div class="t" style="top:773px;font-size:12px;line-height:12px;left:1239.20px;">Display name</div>
</body></html>
